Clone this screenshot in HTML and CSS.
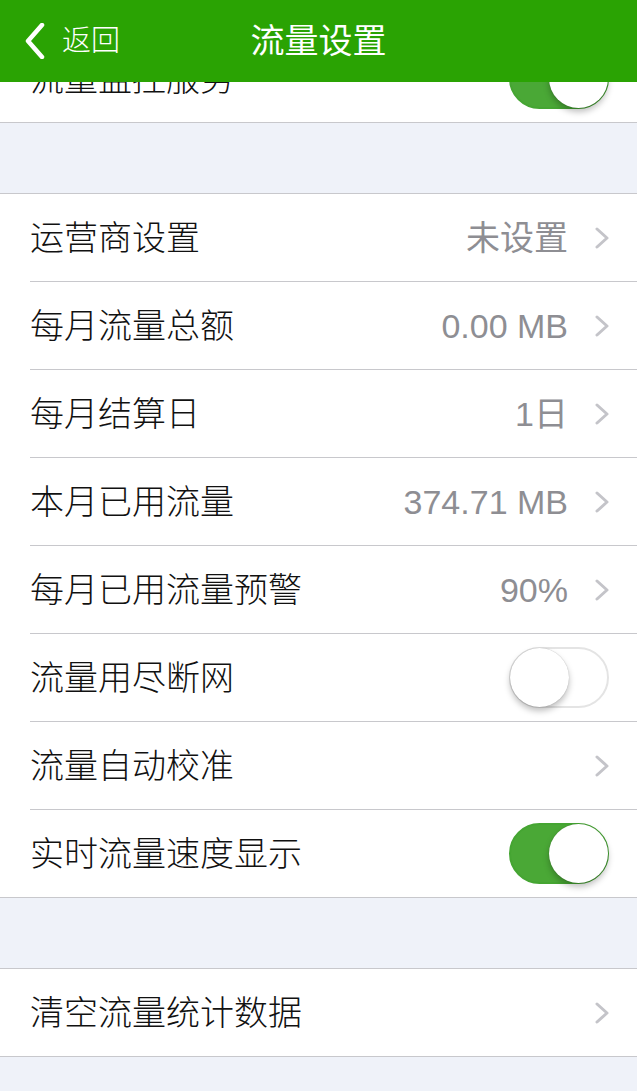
FILE: index.html
```html
<!DOCTYPE html>
<html lang="zh-CN">

<head>
    <meta charset="UTF-8">
    <meta name="viewport" content="width=device-width, initial-scale=1.0">
    <title>流量设置</title>
    <link rel="stylesheet" href="styles.css">
</head>

<body>
    <header class="navbar">
        <a class="back" href="#">
            <svg class="back-icon" width="20" height="36" viewBox="0 0 20 36">
                <polyline points="17,2 3,18 17,34" fill="none" stroke="#fff" stroke-width="4.5" stroke-linecap="round" stroke-linejoin="round" />
            </svg>
            <span>返回</span>
        </a>
        <h1 class="title">流量设置</h1>
        <div></div>
    </header>

    <main class="page">
        <!-- 监控开关 -->
        <section class="group">
            <div class="cell">
                <div class="cell-inner">
                    <span class="label">流量监控服务</span>
                    <span class="switch on"><span class="knob"></span></span>
                </div>
            </div>
        </section>

        <!-- 流量设置 -->
        <section class="group">
            <div class="cell">
                <div class="cell-inner">
                    <span class="label">运营商设置</span>
                    <span class="value">未设置</span>
                    <svg class="chevron" width="14" height="22" viewBox="0 0 14 22"><polyline points="2,2 12,11 2,20" /></svg>
                </div>
            </div>
            <div class="cell">
                <div class="cell-inner">
                    <span class="label">每月流量总额</span>
                    <span class="value">0.00 MB</span>
                    <svg class="chevron" width="14" height="22" viewBox="0 0 14 22"><polyline points="2,2 12,11 2,20" /></svg>
                </div>
            </div>
            <div class="cell">
                <div class="cell-inner">
                    <span class="label">每月结算日</span>
                    <span class="value">1日</span>
                    <svg class="chevron" width="14" height="22" viewBox="0 0 14 22"><polyline points="2,2 12,11 2,20" /></svg>
                </div>
            </div>
            <div class="cell">
                <div class="cell-inner">
                    <span class="label">本月已用流量</span>
                    <span class="value">374.71 MB</span>
                    <svg class="chevron" width="14" height="22" viewBox="0 0 14 22"><polyline points="2,2 12,11 2,20" /></svg>
                </div>
            </div>
            <div class="cell">
                <div class="cell-inner">
                    <span class="label">每月已用流量预警</span>
                    <span class="value">90%</span>
                    <svg class="chevron" width="14" height="22" viewBox="0 0 14 22"><polyline points="2,2 12,11 2,20" /></svg>
                </div>
            </div>
            <div class="cell">
                <div class="cell-inner">
                    <span class="label">流量用尽断网</span>
                    <span class="switch"><span class="knob"></span></span>
                </div>
            </div>
            <div class="cell">
                <div class="cell-inner">
                    <span class="label">流量自动校准</span>
                    <svg class="chevron" width="14" height="22" viewBox="0 0 14 22"><polyline points="2,2 12,11 2,20" /></svg>
                </div>
            </div>
            <div class="cell">
                <div class="cell-inner">
                    <span class="label">实时流量速度显示</span>
                    <span class="switch on"><span class="knob"></span></span>
                </div>
            </div>
        </section>

        <!-- 清空 -->
        <section class="group">
            <div class="cell">
                <div class="cell-inner">
                    <span class="label">清空流量统计数据</span>
                    <svg class="chevron" width="14" height="22" viewBox="0 0 14 22"><polyline points="2,2 12,11 2,20" /></svg>
                </div>
            </div>
        </section>
    </main>
</body>

</html>
```

FILE: styles.css
```css
body {
    margin: 0;
    padding: 0;
    background-color: #eff2f9;
    font-family: "Liberation Sans", "Noto Sans CJK SC", sans-serif;
    color: #111;
}

.navbar {
    position: fixed;
    top: 0;
    left: 0;
    right: 0;
    z-index: 10;
    height: 82px;
    display: grid;
    grid-template-columns: 1fr auto 1fr;
    align-items: center;
    background-color: #2aa303;
    color: #fff;
}

.back {
    display: flex;
    align-items: center;
    gap: 17px;
    padding-left: 25px;
    color: #fff;
    text-decoration: none;
    font-size: 29px;
    font-weight: 300;
    line-height: 36px;
}

.back-icon {
    display: block;
}

.title {
    margin: 0;
    font-size: 34px;
    font-weight: 400;
    line-height: 40px;
}

.page {
    padding-top: 35px;
    padding-bottom: 34px;
}

.group {
    background-color: #fff;
    border-bottom: 1px solid #c8c8cc;
    margin-bottom: 70px;
}

.group:last-child {
    margin-bottom: 0;
}

.group + .group {
    border-top: 1px solid #c8c8cc;
}

.cell {
    padding-left: 30px;
}

.cell-inner {
    height: 87px;
    display: flex;
    align-items: center;
    padding-right: 28px;
    border-bottom: 1px solid #c8c8cc;
}

.cell:last-child .cell-inner {
    border-bottom: none;
}

.label {
    flex: 1;
    font-size: 34px;
    font-weight: 300;
    line-height: 40px;
    white-space: nowrap;
}

.value {
    font-size: 34px;
    line-height: 40px;
    color: #8e8e93;
    margin-right: 27px;
}

.chevron {
    display: block;
    fill: none;
    stroke: #c4c4c9;
    stroke-width: 3;
    stroke-linecap: round;
    stroke-linejoin: round;
}

/* 开关 */
.switch {
    position: relative;
    box-sizing: border-box;
    width: 100px;
    height: 61px;
    border-radius: 31px;
    border: 2px solid #e4e4e4;
    background-color: #fff;
}

.switch .knob {
    position: absolute;
    top: -1px;
    left: -1px;
    width: 59px;
    height: 59px;
    border-radius: 50%;
    background-color: #fff;
    box-shadow: 0 4px 6px rgba(0, 0, 0, 0.25), 0 0 1px rgba(0, 0, 0, 0.3);
}

.switch.on {
    border-color: #45a532;
    background-color: #4aa836;
}

.switch.on .knob {
    left: auto;
    right: -1px;
}
```
